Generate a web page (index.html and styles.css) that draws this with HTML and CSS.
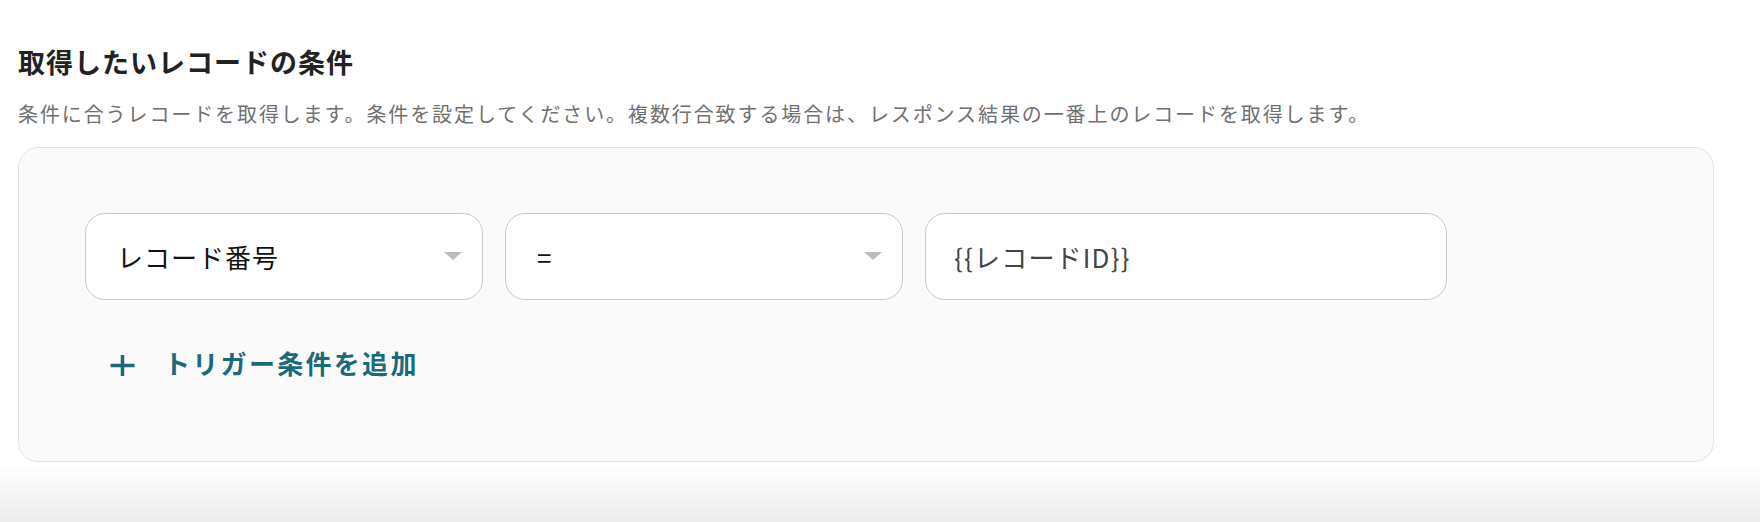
FILE: index.html
```html
<!DOCTYPE html>
<html lang="ja">
<head>
<meta charset="utf-8">
<title>取得したいレコードの条件</title>
<link rel="stylesheet" href="styles.css">
</head>
<body>
<div class="page">
  <h2 class="title">取得したいレコードの条件</h2>
  <p class="desc">条件に合うレコードを取得します。条件を設定してください。複数行合致する場合は、レスポンス結果の一番上のレコードを取得します。</p>
  <div class="panel">
    <div class="fields">
      <div class="select">
        <span class="select-text">レコード番号</span>
        <span class="caret"></span>
      </div>
      <div class="select">
        <span class="select-text eq">=</span>
        <span class="caret"></span>
      </div>
      <div class="input">
        <span class="input-text">{{レコードID}}</span>
      </div>
    </div>
    <div class="add">
      <svg class="plus" width="25" height="23" viewBox="0 0 25 23" aria-hidden="true">
        <path d="M12.5 1V22M0.5 11.5H24.5" fill="none" stroke="currentColor" stroke-width="3.5"/>
      </svg>
      <span class="add-text">トリガー条件を追加</span>
    </div>
  </div>
</div>
<div class="bottom-shade"></div>
</body>
</html>
```

FILE: styles.css
```css
html, body {
  margin: 0;
  padding: 0;
  background: #ffffff;
}

body {
  font-family: "Noto Sans CJK JP", "Noto Sans", sans-serif;
  height: 522px;
  overflow: hidden;
}

.page {
  padding: 44px 46px 0 18px;
}

.title {
  margin: 0;
  font-size: 27px;
  line-height: 36px;
  font-weight: 700;
  letter-spacing: 1px;
  color: #222222;
}

.desc {
  margin: 20px 0 0 0;
  font-size: 20px;
  line-height: 28px;
  letter-spacing: 1.9px;
  color: #707070;
}

.panel {
  margin-top: 19px;
  border: 1px solid #dfe2e6;
  border-radius: 20px;
  background: #fafafa;
  padding: 65px 66px 80px 66px;
}

.fields {
  display: flex;
  gap: 22px;
}

.select,
.input {
  box-sizing: border-box;
  height: 87px;
  border: 1px solid #c9c9c9;
  border-radius: 20px;
  background: #ffffff;
  display: flex;
  align-items: center;
}

.select {
  width: 398px;
  justify-content: space-between;
  padding: 0 20px 0 31px;
}

.input {
  width: 522px;
  padding: 0 0 0 28px;
}

.select-text {
  font-size: 26px;
  line-height: 36px;
  letter-spacing: 1px;
  color: #111111;
}

.caret {
  width: 0;
  height: 0;
  border-left: 9px solid transparent;
  border-right: 9px solid transparent;
  border-top: 8px solid #bdbdbd;
  margin-top: -1px;
}

.input-text {
  font-size: 26px;
  line-height: 36px;
  letter-spacing: 1.2px;
  color: #444444;
}

.add {
  margin-top: 45px;
  height: 36px;
  display: flex;
  align-items: center;
  gap: 29px;
  padding-left: 25px;
  color: #1b6a7b;
}

.plus {
  display: block;
  margin-top: 4px;
}

.add-text {
  font-size: 26px;
  line-height: 36px;
  font-weight: 700;
  letter-spacing: 2.3px;
}

.bottom-shade {
  position: fixed;
  left: 0;
  right: 0;
  bottom: 0;
  height: 58px;
  background: linear-gradient(to bottom, rgba(0, 0, 0, 0), rgba(0, 0, 0, 0.075));
  pointer-events: none;
}
```
